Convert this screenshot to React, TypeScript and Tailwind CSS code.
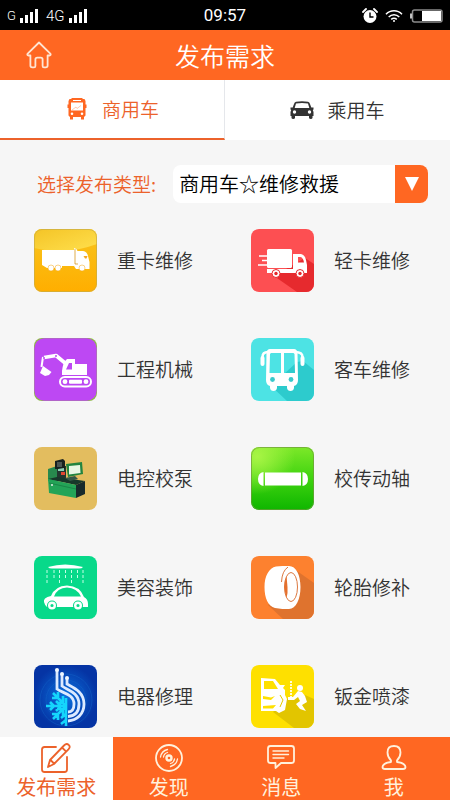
import type { ReactNode } from "react";

function Signal() {
  return (
    <svg width="18" height="14" viewBox="0 0 18 14" fill="#fff" aria-hidden="true">
      <rect x="0" y="9" width="3" height="5" />
      <rect x="5" y="6" width="3" height="8" />
      <rect x="10" y="3" width="3" height="11" />
      <rect x="15" y="0" width="3" height="14" />
    </svg>
  );
}

function StatusBar() {
  return (
    <div className="grid h-[30px] shrink-0 grid-cols-3 items-center bg-black px-[7px] pt-0.5 font-[Roboto,sans-serif] text-white">
      <div className="flex items-center gap-1">
        <span className="text-[13px] font-light">G</span>
        <Signal />
        <span className="ml-1 text-[15px] font-light">4G</span>
        <Signal />
      </div>
      <div className="text-center text-[17px]">09:57</div>
      <div className="flex items-center justify-end gap-[7px]">
        <svg width="16" height="16" viewBox="0 0 16 16" aria-hidden="true">
          <circle cx="8" cy="8.5" r="6.5" fill="#fff" />
          <path d="M8 4.5v4.5h3.5" fill="none" stroke="#000" strokeWidth="1.4" />
          <path d="M1 4 4 1M12 1l3 3" stroke="#fff" strokeWidth="1.8" strokeLinecap="round" />
        </svg>
        <svg width="18" height="14" viewBox="0 0 18 14" fill="none" stroke="#fff" strokeWidth="1.5" aria-hidden="true">
          <path d="M1 5.2C5.5 .6 12.5 .6 17 5.2M3.7 8C6.8 4.900 11.200 4.900 14.300 8M6.200 10.400C7.900 8.900 10.100 8.900 11.800 10.400" />
          <circle cx="9" cy="12" r="1" fill="#fff" stroke="none" />
        </svg>
        <svg width="33" height="14" viewBox="0 0 33 14" aria-hidden="true">
          <rect x="2.5" y="1" width="29.5" height="12" rx="2" fill="#000" stroke="#8b8b8b" strokeWidth="1.5" />
          <rect x="12" y="2" width="19" height="10" fill="#fff" />
          <path d="M1 4.5v5" stroke="#fff" strokeWidth="1.5" />
        </svg>
      </div>
    </div>
  );
}

function Header() {
  return (
    <header className="grid h-[50px] shrink-0 grid-cols-[1fr_auto_1fr] items-center bg-[#ff6722] text-white">
      <button type="button" aria-label="首页" className="ml-[26px] w-[26px]">
        <svg width="26" height="28" viewBox="0 0 26 28" fill="none" stroke="#ffe5d3" strokeWidth="1.8" strokeLinejoin="round" strokeLinecap="round">
          <path d="M13 1.500 24.300 12.600c.8.900.3 1.900-.8 1.900H21.600V24.500c0 1.200-.6 1.800-1.800 1.800H18c-1 0-1.400-.5-1.400-1.400V18.500c0-1.200-.6-1.800-1.800-1.800H11.200c-1.200 0-1.800.6-1.800 1.800v6.400c0 .9-.4 1.400-1.400 1.400H6.200c-1.200 0-1.800-.6-1.800-1.800V14.500H2.500c-1.100 0-1.600-1-.8-1.900Z" />
        </svg>
      </button>
      <h1 className="text-[25px] leading-8 font-[350]">发布需求</h1>
    </header>
  );
}

function Tabs() {
  return (
    <div role="tablist" className="grid h-[60px] shrink-0 grid-cols-2 bg-white text-[19px] font-[350]">
      <button role="tab" type="button" aria-selected="true" className="flex items-center justify-center gap-[15px] border-r border-b-2 border-r-gray-200 border-b-[#ec622b] pl-0.5 text-[#ec622b]">
        <svg width="20" height="22" viewBox="0 0 20 22" fill="#ff6722" aria-hidden="true">
          <path fillRule="evenodd" d="M5 0h10l1 1h1.500L18.500 3V6.500h1V10h-1V17.500L17 19v2.500h-3V19H6v2.500H3V19L1.500 17.500V10h-1V6.500h1V3L2.500 1H4ZM4 4.500V12.500H16V4.500ZM6 2v1h8V2ZM5 14.500a1.300 1.300 0 1 0 0 2.600 1.300 1.300 0 0 0 0-2.600ZM15 14.500a1.300 1.300 0 1 0 0 2.600 1.300 1.300 0 0 0 0-2.600Z" />
          <path d="m5 12 4-3 1 1.500 4-3" fill="none" stroke="#ffb28f" strokeWidth=".7" />
        </svg>
        商用车
      </button>
      <button role="tab" type="button" aria-selected="false" className="flex items-center justify-center gap-[13px] text-[#333]">
        <svg width="24" height="18" viewBox="0 0 24 18" fill="#333" aria-hidden="true">
          <path fillRule="evenodd" d="M6 .8Q12-.5 18 .8 19.500 1.200 20 3L21.300 6.500 23.500 6.500v2L22.800 9l.7 2V15h-1v2q-.3 1-1.700 1T19 17V15H5v2q-.3 1-1.800 1T1.500 17V15h-1V11l.7-2-.7-.5v-2H2.700L4 3Q4.500 1.200 6 .8ZM6 2.500 4.700 7H19.300L18 2.500Q12 1.500 6 2.500ZM4.500 9.300a1.700 1.700 0 1 0 0 3.400 1.700 1.700 0 0 0 0-3.400ZM19.500 9.300a1.700 1.700 0 1 0 0 3.400 1.700 1.700 0 0 0 0-3.400Z" />
        </svg>
        乘用车
      </button>
    </div>
  );
}

function Tile({ children }: { children: ReactNode }) {
  return (
    <svg viewBox="0 0 63 63" className="size-[63px] shrink-0 rounded-lg" aria-hidden="true">
      {children}
    </svg>
  );
}

function HeavyTruck() {
  return (
    <Tile>
      <defs>
        <linearGradient id="gold" x2="0" y2="1">
          <stop offset="0" stopColor="#f8c51d" />
          <stop offset="1" stopColor="#ffae00" />
        </linearGradient>
        <linearGradient id="goldShine" x2="1" y2="1">
          <stop offset="0" stopColor="#f4c426" />
          <stop offset="1" stopColor="#ffe04e" />
        </linearGradient>
      </defs>
      <rect width="63" height="63" fill="url(#gold)" />
      <path d="M0 0H63V15Q31 27 0 19Z" fill="url(#goldShine)" />
      <rect x=".5" y=".5" width="62" height="62" rx="7.5" fill="none" stroke="#c9ad45" strokeOpacity=".7" />
      <g fill="#fff">
        <path d="M8 21H40V37H28V39H13L8 36Z" />
        <path d="M40 37V19Q43 19.500 43.500 22H49Q53 22.500 54 27L55.500 33V40H42Z" />
        <circle cx="17" cy="39" r="3" stroke="#f4a510" strokeWidth=".5" />
        <circle cx="24" cy="39" r="3" stroke="#f4a510" strokeWidth=".5" />
        <circle cx="48" cy="39" r="3" stroke="#f4a510" strokeWidth=".5" />
      </g>
      <path d="M41 20V35H44" fill="none" stroke="#d18b00" strokeWidth=".7" />
      <path d="M49.500 27h4l-1 2.500H51Z" fill="#f5a623" />
    </Tile>
  );
}

function LightTruck() {
  return (
    <Tile>
      <rect width="63" height="63" fill="#fd4f52" />
      <path d="M54 29 63 35V63H46L23 47Z" fill="#e62a2e" />
      <g fill="#fff">
        <rect x="16" y="20" width="25" height="19" rx="1.5" />
        <path fillRule="evenodd" d="M42 25H50Q54 26 55 31L56 36V44H16V40H42ZM47 28V33.500H53Q52 28 49 28Z" />
        <path d="M8 27H17M11 31.500H17M7 36H17" stroke="#fff" strokeWidth="1.5" />
        <circle cx="25" cy="44.5" r="4" stroke="#e62a2e" />
        <circle cx="49" cy="44.5" r="4" stroke="#e62a2e" />
      </g>
      <circle cx="25" cy="44.5" r="1.7" fill="#e62a2e" />
      <circle cx="49" cy="44.5" r="1.7" fill="#e62a2e" />
    </Tile>
  );
}

function Excavator() {
  return (
    <Tile>
      <rect width="63" height="63" fill="#8fb84a" />
      <rect x=".3" y=".3" width="62.4" height="62.4" rx="10" fill="#bd48f3" />
      <path d="M31 25 22 17.500 10 19.500" fill="none" stroke="#fff" strokeWidth="3.6" strokeLinejoin="round" />
      <path d="M9 19 7.500 29" stroke="#fff" strokeWidth="2" />
      <g fill="#fff">
        <path d="M9 28 17.500 34 15 37 11 38 6 35Z" />
        <path fillRule="evenodd" d="M33 21H41V26H53V37H28V33Q29 24 33 21ZM35 25 32 31.500H38V25Z" />
      </g>
      <circle cx="10" cy="20" r="1" fill="#bd48f3" />
      <circle cx="22" cy="18" r="1" fill="#bd48f3" />
      <rect x="26" y="39" width="31" height="9.5" rx="4.75" fill="#bd48f3" stroke="#fff" strokeWidth="2" />
      <circle cx="31" cy="43.7" r="2.4" fill="#fff" />
      <circle cx="52" cy="43.7" r="2.4" fill="#fff" />
      <rect x="35" y="41.7" width="13" height="4" rx="1" fill="#fff" />
    </Tile>
  );
}

function Bus() {
  return (
    <Tile>
      <rect width="63" height="63" fill="#4de3e4" />
      <path d="M52 23 63 32V63H36L20 48 46 24Z" fill="#2dcbcd" />
      <path d="M17 14Q11.500 14 11.500 19V26M44 14Q51.500 14 51.500 19V26" fill="none" stroke="#fff" strokeWidth="2.5" />
      <path d="M11.500 20v6M51.500 20v6" stroke="#fff" strokeWidth="4" strokeLinecap="round" />
      <path fill="#fff" fillRule="evenodd" d="M19 11H43Q46 11 46.500 15L47 42Q47 47 43 48V50Q42.500 53 39.500 53T36 50V48H26V50Q25.500 53 22.500 53T19 50V48Q15 47 15 42L15.500 15Q16 11 19 11ZM19 16 18.500 35H30V15H20ZM33 15V35H44L43.500 16 42.500 15Z" />
      <circle cx="21.5" cy="41.5" r="2.4" fill="#39c9cb" />
      <circle cx="40" cy="41.5" r="2.4" fill="#39c9cb" />
    </Tile>
  );
}

function PumpBench() {
  return (
    <Tile>
      <rect width="63" height="63" fill="#e3bd5f" />
      <path d="M14 22 23 19V35L14 34Z" fill="#28894d" />
      <path d="M23 19H32V34H23Z" fill="#24362f" />
      <path d="M21 14 29 12 31 14V22H21Z" fill="#17201f" />
      <path d="M23 15h5v5h-5Z" fill="#4b5553" />
      <path d="M14 32 23 30 51 34 42 38Z" fill="#17382a" />
      <path d="M14 32 42 38V51L15 46Z" fill="#23a457" />
      <path d="M42 38 51 34V47L42 51Z" fill="#182a2b" />
      <path d="M32 17 48 15 49 27 34 30Z" fill="#23843f" />
      <path d="m35 19 11-1 .5 8-11.500 1.500Z" fill="#e9f7e5" />
      <path d="m24 22 6-1v3h-6Z" fill="#8dd0b4" />
      <path d="M27 25h4v3h-4Z" fill="#e34832" />
      <path d="m31 31 10-2 3 3-8 2Z" fill="#345847" />
      <path d="M15 36 42 42" stroke="#17783f" strokeWidth=".7" />
      <circle cx="18" cy="38" r="1" fill="#e5eee3" />
    </Tile>
  );
}

function DriveShaft() {
  return (
    <Tile>
      <defs>
        <linearGradient id="leaf" x2="0" y2="1">
          <stop offset="0" stopColor="#7de829" />
          <stop offset=".5" stopColor="#3fd30f" />
          <stop offset="1" stopColor="#0eb600" />
        </linearGradient>
        <radialGradient id="leafShine" cx=".1" cy=".15" r=".6">
          <stop offset="0" stopColor="#a8f545" />
          <stop offset="1" stopColor="#a8f545" stopOpacity="0" />
        </radialGradient>
      </defs>
      <rect width="63" height="63" fill="url(#leaf)" />
      <rect width="63" height="63" fill="url(#leafShine)" />
      <rect x=".5" y=".5" width="62" height="62" rx="8" fill="none" stroke="#719a3d" strokeOpacity=".7" />
      <rect x="14" y="25.5" width="36" height="13" fill="#fff" />
      <path d="M12.500 25v14Q7 38 7 32T12.500 25ZM51.500 25v14Q57 38 57 32T51.500 25Z" fill="#fff" />
    </Tile>
  );
}

function CarWash() {
  return (
    <Tile>
      <rect width="63" height="63" fill="#08d98a" />
      <path d="M14 11Q31 6 49 11 48 12.500 45 12.500H18Q15 12.500 14 11Z" fill="#fff" />
      <path d="M13 14V27M20 14V24M25.500 14V27M31.500 14V24M37.500 14V27M43.500 14V24M49 14V27" stroke="#c5ffe6" strokeWidth="1" strokeDasharray="3 2" />
      <path fillRule="evenodd" d="M17 40Q21 30 33 29.500 46 30 50 41 54 43 54 48V51H13Q8 46 11 42.500 13 40.500 17 40ZM20 40.500H47Q43 32 33 31.500 23 32 20 40.500Z" fill="#fff" />
      <circle cx="18" cy="49.5" r="5" fill="#08d98a" />
      <circle cx="44" cy="49.5" r="5" fill="#08d98a" />
      <circle cx="18" cy="49.5" r="2.8" fill="none" stroke="#fff" strokeWidth="2.4" />
      <circle cx="44" cy="49.5" r="2.8" fill="none" stroke="#fff" strokeWidth="2.4" />
    </Tile>
  );
}

function Tire() {
  return (
    <Tile>
      <rect width="63" height="63" fill="#fd812f" />
      <path d="M46 15 63 27V63H32L17 49Z" fill="#df732e" />
      <path d="M38 10C45 10 49.500 19 49.500 31S45 53 38 53C34 53 29 53 24 52 17 50 13.500 42 13.500 31S18 12 25 10.500C29 9.500 34 10 38 10Z" fill="#fff" />
      <path d="M37 11Q31 15 30.500 26" fill="none" stroke="#dc7840" strokeWidth="1" />
      <ellipse cx="40" cy="31" rx="6.5" ry="14.5" fill="#fff" stroke="#dc7840" strokeWidth="1" />
      <path d="M35.500 20Q31.500 30 35.500 42 37 37 36.500 31T35.500 20Z" fill="#e5702d" />
    </Tile>
  );
}

function Electrics() {
  return (
    <Tile>
      <defs>
        <radialGradient id="deepBlue">
          <stop offset="0" stopColor="#0b72df" />
          <stop offset="1" stopColor="#0534a4" />
        </radialGradient>
      </defs>
      <rect width="63" height="63" fill="url(#deepBlue)" />
      <g fill="none" stroke="#1769ca" strokeOpacity=".4">
        <circle cx="32" cy="35" r="20" />
        <circle cx="32" cy="35" r="26" />
      </g>
      <g fill="none" stroke="#dceaff" strokeWidth="2.8">
        <path d="M23 5V24C28 28 40 29 40 39 40 44 38 47 34 47" />
        <path d="M28 9V21C33 25 45 27 45 39 45 47 41 51 34 51.500" />
        <path d="M33 13V19C38 22 50 26 50 39 50 49 43 55.500 34 56" />
      </g>
      <g fill="#eff7ff">
        <circle cx="23" cy="5" r="2" />
        <circle cx="28" cy="9" r="2" />
        <circle cx="33" cy="13" r="2" />
      </g>
      <path d="M33 41H12M16 37l4 4-4 4M22 36l5 5-5 5M32 41 19 28M18 33h6v-6M23 38h6v-7M32 41 19 54M18 49h6v6M23 44h6v7M32 33V61M27 53l5-4M27 59l5-4" fill="none" stroke="#15d5fc" strokeWidth="2.6" />
    </Tile>
  );
}

function BodyPaint() {
  return (
    <Tile>
      <rect width="63" height="63" fill="#fee000" />
      <path d="M54 30 63 34V63H43L22 47 35 34Z" fill="#e2c500" />
      <g fill="#fff">
        <path fillRule="evenodd" d="M10 13 24 14 29 20H34L32 23 34 25V30L36 34 34 45 28 48 25 46H10ZM13 16V24H27L22 16ZM12 31 20 32.500 24 31 20 35 12 34ZM12 41V43.500H22L25 40Z" />
        <circle cx="49" cy="23" r="3" />
        <path d="M47 26 51 27 54 31 56 37 51 40 55 46 49 44 45 39 49 36 47 32 43 35H37V32H42Z" />
      </g>
      <path d="M40 16V32" stroke="#fff" strokeWidth="1.7" strokeDasharray="2 1" />
      <path d="m29 30 3 5-3 7" fill="none" stroke="#e5ca00" strokeWidth="1" />
    </Tile>
  );
}

const services: { name: string; icon: ReactNode }[] = [
  { name: "重卡维修", icon: <HeavyTruck /> },
  { name: "轻卡维修", icon: <LightTruck /> },
  { name: "工程机械", icon: <Excavator /> },
  { name: "客车维修", icon: <Bus /> },
  { name: "电控校泵", icon: <PumpBench /> },
  { name: "校传动轴", icon: <DriveShaft /> },
  { name: "美容装饰", icon: <CarWash /> },
  { name: "轮胎修补", icon: <Tire /> },
  { name: "电器修理", icon: <Electrics /> },
  { name: "钣金喷漆", icon: <BodyPaint /> },
];

function TypePicker() {
  return (
    <div className="flex items-center gap-[17px] pr-[22px] pl-[37px]">
      <label htmlFor="kind" className="shrink-0 text-[19px] font-[350] text-[#ec622b]">
        选择发布类型:
      </label>
      <div className="relative h-[38px] min-w-0 flex-1">
        <select id="kind" className="size-full appearance-none rounded-lg bg-white pr-9 pl-1.5 text-xl font-[350] text-black">
          <option>商用车☆维修救援</option>
        </select>
        <span className="pointer-events-none absolute inset-y-0 right-0 flex w-[33px] items-center justify-center rounded-r-lg bg-[#ff6722]">
          <svg width="14" height="14" viewBox="0 0 14 14" fill="#fff" aria-hidden="true">
            <path d="M0 0H14L7 14Z" />
          </svg>
        </span>
      </div>
    </div>
  );
}

function NavItem({ label, active, children }: { label: string; active?: boolean; children: ReactNode }) {
  return (
    <a
      href="#"
      aria-current={active ? "page" : undefined}
      className={
        active
          ? "flex flex-col items-center gap-0.5 bg-white pt-1.5 text-[#ec622b]"
          : "flex flex-col items-center gap-0.5 bg-[#ff6722] pt-1.5 text-[#fff1dc]"
      }
    >
      <svg width="32" height="30" viewBox="0 0 32 30" fill="none" stroke="currentColor" strokeWidth="1.8" strokeLinecap="round" strokeLinejoin="round" aria-hidden="true">
        {children}
      </svg>
      <span className="text-xl leading-6">{label}</span>
    </a>
  );
}

function BottomNav() {
  return (
    <nav className="grid h-[63px] shrink-0 grid-cols-4 overflow-hidden">
      <NavItem label="发布需求" active>
        <path d="M16 4H4.500Q2 4 2 6.500V26.500Q2 29 4.500 29H24.500Q27 29 27 26.500V14" />
        <path d="m24 2.500 1.200-1q1.800-1.200 3.500.4t.5 3.400L28.200 6.700 14 21 8 24 10 17Z M22 4.500 26.200 8.700M11 17.500 14 20.500" />
      </NavItem>
      <NavItem label="发现">
        <circle cx="16" cy="15" r="13" />
        <circle cx="16" cy="15" r="2.5" strokeWidth="2.4" />
        <path d="M7.500 14Q8.500 8 14.500 6.500M10.500 14Q11 10.500 14.500 9.500M24.500 16Q23.500 22 17.500 23.500M21.500 16Q21 19.500 17.500 20.500" strokeWidth="1.3" />
      </NavItem>
      <NavItem label="消息">
        <path d="M5.500 3H26.500Q29 3 29 5.500V17.500Q29 20 26.500 20H16L10.500 25V20H5.500Q3 20 3 17.500V5.500Q3 3 5.500 3Z" />
        <path d="M8 8H23.500M8 11.500H23.500M8 15H19" strokeWidth="1.4" />
      </NavItem>
      <NavItem label="我">
        <path d="M16 3Q22.500 3 22.500 9.500 22.500 14 19 17.500V19Q27 20 27.500 24 27.500 26 25 26H7Q4.500 26 4.500 24 5 20 13 19V17.500Q9.500 14 9.500 9.500 9.500 3 16 3Z" />
      </NavItem>
    </nav>
  );
}

export default function App() {
  return (
    <div className="flex h-screen flex-col bg-[#f6f6f6] font-['Noto_Sans_CJK_SC',sans-serif]">
      <StatusBar />
      <Header />
      <Tabs />
      <main className="min-h-0 flex-1 overflow-y-auto pt-[25px] [scrollbar-width:none]">
        <TypePicker />
        <div className="mt-[26px] grid grid-cols-2 gap-y-[46px] px-2">
          {services.map((s) => (
            <button key={s.name} type="button" className="flex items-center gap-5 pl-[26px] text-[19px] font-[350] text-[#333]">
              {s.icon}
              {s.name}
            </button>
          ))}
        </div>
      </main>
      <BottomNav />
    </div>
  );
}
